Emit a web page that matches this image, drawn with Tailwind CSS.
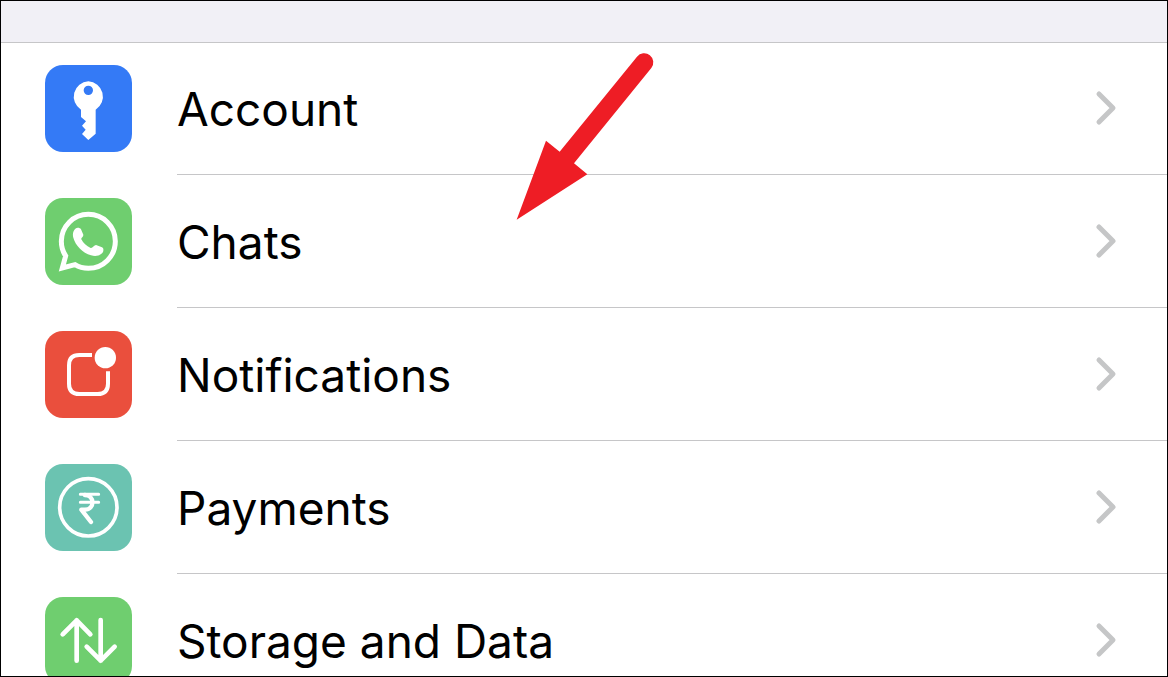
<!DOCTYPE html>
<html lang="en">
<head>
<meta charset="utf-8">
<meta name="viewport" content="width=device-width, initial-scale=1">
<title>Settings</title>
<script src="https://cdn.jsdelivr.net/npm/@tailwindcss/browser@4"></script>
</head>
<body class="bg-white text-black font-['Inter',sans-serif]">
<div class="relative h-screen overflow-hidden border border-black">
  <header class="h-[42px] border-b border-[#c6c6c8] bg-[#f1f0f6]"></header>
  <nav aria-label="Settings" class="-mt-px">
    <ul>
      <li><a href="#account" class="flex h-[133px] pl-11">
        <svg class="mt-[23px] size-[87px] shrink-0 rounded-[18px] bg-[#347af6]" viewBox="30 30 261 261" aria-hidden="true">
          <path fill="#fff" fill-rule="evenodd" d="M160 79A46 46 0 0 1 182 164V236L160 255L141 237L152 224L141 212L153 199L138 186V164A46 46 0 0 1 160 79ZM160 92A14 14 0 1 0 160 120A14 14 0 1 0 160 92Z"/>
        </svg>
        <span class="ml-[45px] flex flex-1 items-center justify-between border-b border-[#c6c6c8] pr-[50px]"><span class="pt-0.5 text-[46px]/[56px]">Account</span>
          <svg class="h-9 w-[22px]" viewBox="0 0 22 36" fill="none" stroke="#c5c6c7" stroke-width="5" stroke-linecap="round" stroke-linejoin="round" aria-hidden="true"><path d="M4 4L18 18L4 32"/></svg></span>
      </a></li>
      <li><a href="#chats" class="flex h-[133px] pl-11">
        <svg class="mt-[23px] size-[87px] shrink-0 rounded-[18px] bg-[#6fce6f]" viewBox="30 30 261 261" aria-hidden="true">
          <path fill="none" stroke="#fff" stroke-width="15" d="M82 240L92 204C84 192 79 177 79 160A81 81 0 1 1 160 241C145 241 131 237 120 230Z"/>
          <path fill="#fff" d="M121 122C126 118 135 119 138 124L145 140C146 146 137 150 139 154C145 166 154 174 167 180C172 182 177 171 183 171L201 178C207 181 206 190 202 195C193 204 181 206 168 202C143 195 121 172 115 149C112 139 114 128 121 122Z"/>
        </svg>
        <span class="ml-[45px] flex flex-1 items-center justify-between border-b border-[#c6c6c8] pr-[50px]"><span class="pt-0.5 text-[46px]/[56px]">Chats</span>
          <svg class="h-9 w-[22px]" viewBox="0 0 22 36" fill="none" stroke="#c5c6c7" stroke-width="5" stroke-linecap="round" stroke-linejoin="round" aria-hidden="true"><path d="M4 4L18 18L4 32"/></svg></span>
      </a></li>
      <li><a href="#notifications" class="flex h-[133px] pl-11">
        <svg class="mt-[23px] size-[87px] shrink-0 rounded-[18px] bg-[#ea4f3d]" viewBox="30 30 261 261" aria-hidden="true">
          <path fill="none" stroke="#fff" stroke-width="12" d="M171 102H133Q102 102 102 133V188Q102 219 133 219H188Q219 219 219 188V151"/>
          <circle cx="211" cy="110" r="32" fill="#fff"/>
        </svg>
        <span class="ml-[45px] flex flex-1 items-center justify-between border-b border-[#c6c6c8] pr-[50px]"><span class="pt-0.5 text-[46px]/[56px]">Notifications</span>
          <svg class="h-9 w-[22px]" viewBox="0 0 22 36" fill="none" stroke="#c5c6c7" stroke-width="5" stroke-linecap="round" stroke-linejoin="round" aria-hidden="true"><path d="M4 4L18 18L4 32"/></svg></span>
      </a></li>
      <li><a href="#payments" class="flex h-[133px] pl-11">
        <svg class="mt-[23px] size-[87px] shrink-0 rounded-[18px] bg-[#6bc3b1]" viewBox="30 30 261 261" fill="none" stroke="#fff" aria-hidden="true">
          <circle cx="160" cy="160" r="86" stroke-width="11"/>
          <g stroke-linecap="round" stroke-linejoin="round"><path stroke-width="9" d="M136 121H191M136 145H191"/><path stroke-width="13" d="M149 123C180 123 180 167 150 167H139L168 204"/></g>
        </svg>
        <span class="ml-[45px] flex flex-1 items-center justify-between border-b border-[#c6c6c8] pr-[50px]"><span class="pt-0.5 text-[46px]/[56px]">Payments</span>
          <svg class="h-9 w-[22px]" viewBox="0 0 22 36" fill="none" stroke="#c5c6c7" stroke-width="5" stroke-linecap="round" stroke-linejoin="round" aria-hidden="true"><path d="M4 4L18 18L4 32"/></svg></span>
      </a></li>
      <li><a href="#storage" class="flex h-[133px] pl-11">
        <svg class="mt-[23px] size-[87px] shrink-0 rounded-[18px] bg-[#6fce6f]" viewBox="30 30 261 261" fill="none" stroke="#fff" stroke-width="14" stroke-linecap="round" stroke-linejoin="round" aria-hidden="true">
          <path d="M125 221V100M83 142L125 100L166 142M197 99V221M155 179L197 221L239 179"/>
        </svg>
        <span class="ml-[45px] flex flex-1 items-center justify-between border-b border-[#c6c6c8] pr-[50px]"><span class="pt-0.5 text-[46px]/[56px]">Storage and Data</span>
          <svg class="h-9 w-[22px]" viewBox="0 0 22 36" fill="none" stroke="#c5c6c7" stroke-width="5" stroke-linecap="round" stroke-linejoin="round" aria-hidden="true"><path d="M4 4L18 18L4 32"/></svg></span>
      </a></li>
    </ul>
  </nav>
  <!-- Red arrow pointing at the Chats row -->
  <svg class="pointer-events-none absolute left-[499px] top-[39px] h-[190px] w-[170px]" viewBox="0 0 510 570" aria-hidden="true">
    <path fill="#ee1d25" d="M50 539L138 302L179 335L411 50A27 27 0 0 1 454 84L222 370L262 403Z"/>
  </svg>
</div>
</body>
</html>
